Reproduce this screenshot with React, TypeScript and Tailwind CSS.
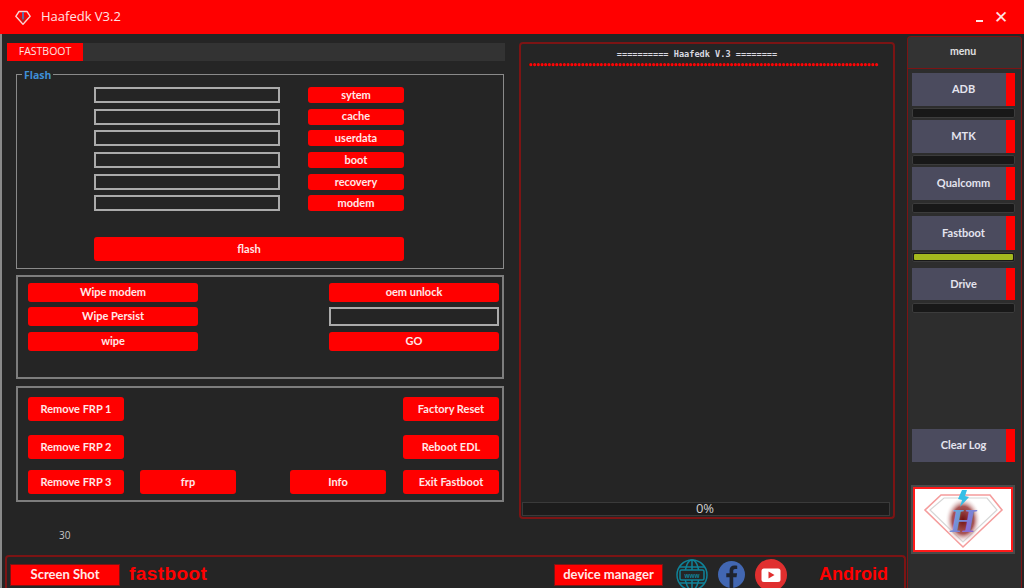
const btn = "flex items-center justify-center rounded-[3px] bg-[#ff0000] font-['Lato',sans-serif] text-[11px] font-bold text-[#ffe8e8]";
const box = "border-2 border-[#7d7d7d]";
const input = "border-2 border-[#ababab]";
const footerBtn = "flex h-5 items-center justify-center bg-[#ff0000] font-['Lato',sans-serif] text-[13px] font-bold text-[#ffe8e8] shadow-[0_0_0_1px_#7c1414]";

const GemIcon = ({ className }: { className?: string }) => (
  <svg viewBox="0 0 20 20" className={className} fill="none">
    <path d="M5 2.500h10l4 6L10 18.500 1 8.500z" stroke="#f8d4d4" strokeWidth="1.700" strokeLinejoin="round" />
    <path d="M10 3v10" stroke="#4f78b8" strokeWidth="2.200" />
    <path d="M6.500 8l3.500 7 3.500-7" stroke="#a82828" strokeWidth="1.400" />
  </svg>
);

const GlobeIcon = () => (
  <svg viewBox="0 0 32 32" className="h-8 w-8" fill="none" stroke="#0f8399" strokeWidth="1.500">
    <circle cx="16" cy="16" r="15" />
    <ellipse cx="16" cy="16" rx="7" ry="15" />
    <path d="M16 1v10M16 21v10M3.500 8h25M3.500 24h25" />
    <rect x="4" y="11" width="24" height="10" rx="1.500" fill="#252525" />
    <text x="16" y="18.500" textAnchor="middle" fontSize="6.500" fontWeight="700" fill="#0f8399" stroke="none" fontFamily="Liberation Sans, sans-serif">www</text>
  </svg>
);

const FacebookIcon = () => (
  <svg viewBox="0 0 28 28" className="h-[27px] w-[27px]">
    <circle cx="14" cy="14" r="14" fill="#4267b2" />
    <path d="M15.800 28V16.800h3.400l.6-4h-4v-2.400c0-1.200.5-2 2.100-2h2V4.900c-.8-.1-1.800-.2-2.900-.2-3 0-5 1.800-5 5.200v2.900H8.600v4H12V28z" fill="#1f2430" />
  </svg>
);

const YoutubeIcon = () => (
  <svg viewBox="0 0 32 32" className="h-8 w-8">
    <circle cx="16" cy="16" r="16" fill="#e02f2f" />
    <rect x="6.500" y="9.500" width="19" height="13.500" rx="2.500" fill="#fff" />
    <path d="M13.500 12.500v7l6-3.500z" fill="#e02f2f" />
  </svg>
);

const HaafedkLogo = () => (
  <div className="flex h-[65px] w-[100px] items-center justify-center border-2 border-[#ff1a1a] bg-white shadow-[0_0_0_2px_#4a4a4a]">
    <svg viewBox="0 0 96 61" className="h-[61px] w-[96px]">
      <defs>
        <radialGradient id="glow">
          <stop offset="0%" stopColor="#701010" />
          <stop offset="60%" stopColor="#9a3a3a" stopOpacity="0.85" />
          <stop offset="100%" stopColor="#fff" stopOpacity="0" />
        </radialGradient>
        <linearGradient id="letter" x1="0" x2="1" y1="0" y2="1">
          <stop offset="0%" stopColor="#56c4dc" />
          <stop offset="100%" stopColor="#9a4ad0" />
        </linearGradient>
      </defs>
      <path d="M26 6h49l12 15-39 37L10 21z" fill="none" stroke="#f59c9c" strokeWidth="1.600" />
      <path d="M29 9h43l10 12-34 32L15 21z" fill="none" stroke="#d6d6d6" strokeWidth="1.200" />
      <ellipse cx="48" cy="31" rx="18" ry="23" fill="url(#glow)" />
      <path d="M47 1l-4 9 4 1-2 7 9-10-4-1 2-6z" fill="#37bfe6" />
      <text x="48" y="43" textAnchor="middle" fontSize="34" fontStyle="italic" fontWeight="700" fill="url(#letter)" fontFamily="Liberation Serif, serif">H</text>
    </svg>
  </div>
);

const flashRows = ["sytem", "cache", "userdata", "boot", "recovery", "modem"];

const menuItems = [
  { label: "ADB", wrap: "h-[47px]", gap: "mt-[2px]", h: "h-[33px]" },
  { label: "MTK", wrap: "h-[47px]", gap: "mt-[2px]", h: "h-[33px]" },
  { label: "Qualcomm", wrap: "h-[49px]", gap: "mt-[3px]", h: "h-[33px]" },
  { label: "Fastboot", wrap: "h-[52px]", gap: "mt-[2px]", h: "h-[34px]", active: true },
  { label: "Drive", wrap: "h-[45px]", gap: "mt-[3px]", h: "h-[32px]" },
];

const MenuButton = ({ label, h }: { label: string; h: string }) => (
  <div className={`flex w-[103px] bg-[#4b4b5e] ${h}`}>
    <div className="flex flex-1 items-center justify-center pl-[9px] font-['Lato',sans-serif] text-[11px] font-bold text-[#e4e4ee]">{label}</div>
    <div className="w-[9px] bg-[#ff0000]" />
  </div>
);

export default function App() {
  return (
    <div className="flex h-[588px] w-[1024px] flex-col overflow-hidden bg-[#252525]">
      <header className="flex h-[34px] shrink-0 items-center bg-[#ff0000] pl-[15px] pr-[16px] text-[#ffe3e3]">
        <GemIcon className="h-[17px] w-4" />
        <span className="ml-[10px] font-['Open_Sans',sans-serif] text-[13px]">Haafedk V3.2</span>
        <span className="ml-auto mt-[8px] h-[2px] w-[7px] bg-[#ffe3e3]" />
        <span className="ml-[11px] font-['Liberation_Sans',sans-serif] text-[17px] leading-none">✕</span>
      </header>

      <div className="flex min-h-0 flex-1">
        <div className="flex w-[906px] shrink-0 flex-col border-l-2 border-[#8a8a8a]">
          <div className="flex min-h-0 flex-1">
            <section className="w-[517px] shrink-0 pl-[5px] pt-[9px]">
              <div className="flex h-[18px] w-[498px] bg-[#333333]">
                <div className="flex w-[76px] items-center justify-center bg-[#ff0000] font-['Open_Sans',sans-serif] text-[10.500px] text-[#ffe3e3]">FASTBOOT</div>
              </div>

              <div className="ml-[9px] mt-[13px] w-[488px]">
                <fieldset className="relative h-[195px] border border-[#8a8a8a] pl-[77px] pt-[12px]">
                  <span className="absolute -top-[6px] left-[5px] bg-[#252525] px-[2px] font-['Open_Sans',sans-serif] text-[10.500px] font-bold leading-[13px] text-[#3f8fd8]">Flash</span>
                  <div className="flex flex-col gap-[5.700px]">
                    {flashRows.map((name) => (
                      <div key={name} className="flex gap-[28px]">
                        <div className={`h-4 w-[186px] ${input}`} />
                        <div className={`h-4 w-[96px] ${btn}`}>{name}</div>
                      </div>
                    ))}
                  </div>
                  <div className={`mt-[26px] h-[24px] w-[310px] ${btn}`}>flash</div>
                </fieldset>

                <div className={`mt-[6px] flex h-[104px] justify-between pl-[10px] pr-[3px] pt-[6px] ${box}`}>
                  <div className="flex w-[170px] flex-col">
                    <div className={`h-[19px] ${btn}`}>Wipe modem</div>
                    <div className={`mt-[5px] h-[19px] ${btn}`}>Wipe Persist</div>
                    <div className={`mt-[6px] h-[19px] ${btn}`}>wipe</div>
                  </div>
                  <div className="flex w-[170px] flex-col">
                    <div className={`h-[19px] ${btn}`}>oem unlock</div>
                    <div className={`mt-[5px] h-[19px] ${input}`} />
                    <div className={`mt-[6px] h-[19px] ${btn}`}>GO</div>
                  </div>
                </div>

                <div className={`mt-[7px] flex h-[116px] flex-col gap-[14px] pl-[10px] pr-[3px] pt-[9px] ${box}`}>
                  <div className="flex h-[24px] justify-between">
                    <div className={`w-[96px] ${btn}`}>Remove FRP 1</div>
                    <div className={`w-[96px] ${btn}`}>Factory Reset</div>
                  </div>
                  <div className="flex h-[24px] justify-between">
                    <div className={`w-[96px] ${btn}`}>Remove FRP 2</div>
                    <div className={`w-[96px] ${btn}`}>Reboot EDL</div>
                  </div>
                  <div className="-mt-[3px] flex h-[24px]">
                    <div className={`w-[96px] ${btn}`}>Remove FRP 3</div>
                    <div className={`ml-[16px] w-[96px] ${btn}`}>frp</div>
                    <div className={`ml-[54px] w-[96px] ${btn}`}>Info</div>
                    <div className={`ml-auto w-[96px] ${btn}`}>Exit Fastboot</div>
                  </div>
                </div>
              </div>

              <div className="ml-[52px] mt-[26px] font-['Open_Sans',sans-serif] text-[10px] leading-[14px] text-[#c8c8c8]">30</div>
            </section>

            <section className="mt-[8px] flex h-[477px] w-[376px] shrink-0 flex-col rounded-[4px] border-2 border-[#7c1414] px-[1px] pb-[1px]">
              <div className="mt-[5px] pr-[20px] text-center font-['DejaVu_Sans_Mono',monospace] text-[8.600px] font-bold leading-[11px] text-[#d8d8e0]">========== Haafedk V.3 ========</div>
              <div className="ml-[6px] mt-[1px] h-[9px] overflow-hidden whitespace-nowrap font-['DejaVu_Sans_Mono',monospace] text-[8px] font-bold leading-[9px] tracking-[-1.100px] text-[#ff0000]">
                {"•".repeat(94)}
              </div>
              <div className="mt-auto flex h-[14px] w-[368px] items-center justify-center bg-[#1c1c1c] pr-[2px] shadow-[inset_0_0_0_1px_#3a3a3a] font-['Open_Sans',sans-serif] text-[13px] text-[#d0d0d0]">0%</div>
            </section>
          </div>

          <footer className="ml-[3px] flex h-[33px] shrink-0 items-center rounded-t-[4px] border-x-2 border-t-2 border-[#7c1414] pl-[4px] pt-[4px]">
            <div className={`w-[108px] ${footerBtn}`}>Screen Shot</div>
            <span className="ml-[10px] w-[78px] whitespace-nowrap font-['Liberation_Sans',sans-serif] text-[19px] font-bold tracking-[0.4px] text-[#ff0000]">fastboot</span>
            <div className={`ml-[348px] w-[107px] ${footerBtn}`}>device manager</div>
            <div className="ml-[14px] flex items-center gap-[10px]">
              <GlobeIcon />
              <FacebookIcon />
              <YoutubeIcon />
            </div>
            <span className="ml-[32px] font-['Liberation_Sans',sans-serif] text-[18px] font-bold text-[#ff0000]">Android</span>
          </footer>
        </div>

        <aside className="flex w-[116px] shrink-0 flex-col pl-[1px] pt-[2px]">
          <div className="flex h-[32px] w-[115px] items-center justify-center rounded-t-[4px] border-x border-t border-[#7c1414] bg-[#333333] pb-[2px] pr-[3px] font-['Lato',sans-serif] text-[10.500px] font-bold text-[#e0e0e0]">menu</div>
          <div className="flex w-[115px] flex-1 flex-col border-x border-t border-[#7c1414] bg-[#2d2d2d] pl-[4px] pt-[4px]">
            {menuItems.map((item) => (
              <div key={item.label} className={item.wrap}>
                <MenuButton label={item.label} h={item.h} />
                <div className={`${item.gap} h-[10px] w-[103px] rounded-[2px] bg-[#181818] p-[2px] shadow-[inset_0_0_0_1px_#3c3c3c]`}>
                  {item.active && <div className="h-full rounded-[1px] bg-[#a4b81e]" />}
                </div>
              </div>
            ))}
            <div className="mt-[116px]">
              <MenuButton label="Clear Log" h="h-[33px]" />
            </div>
            <div className="ml-[1px] mt-[25px]">
              <HaafedkLogo />
            </div>
          </div>
        </aside>
      </div>
    </div>
  );
}
